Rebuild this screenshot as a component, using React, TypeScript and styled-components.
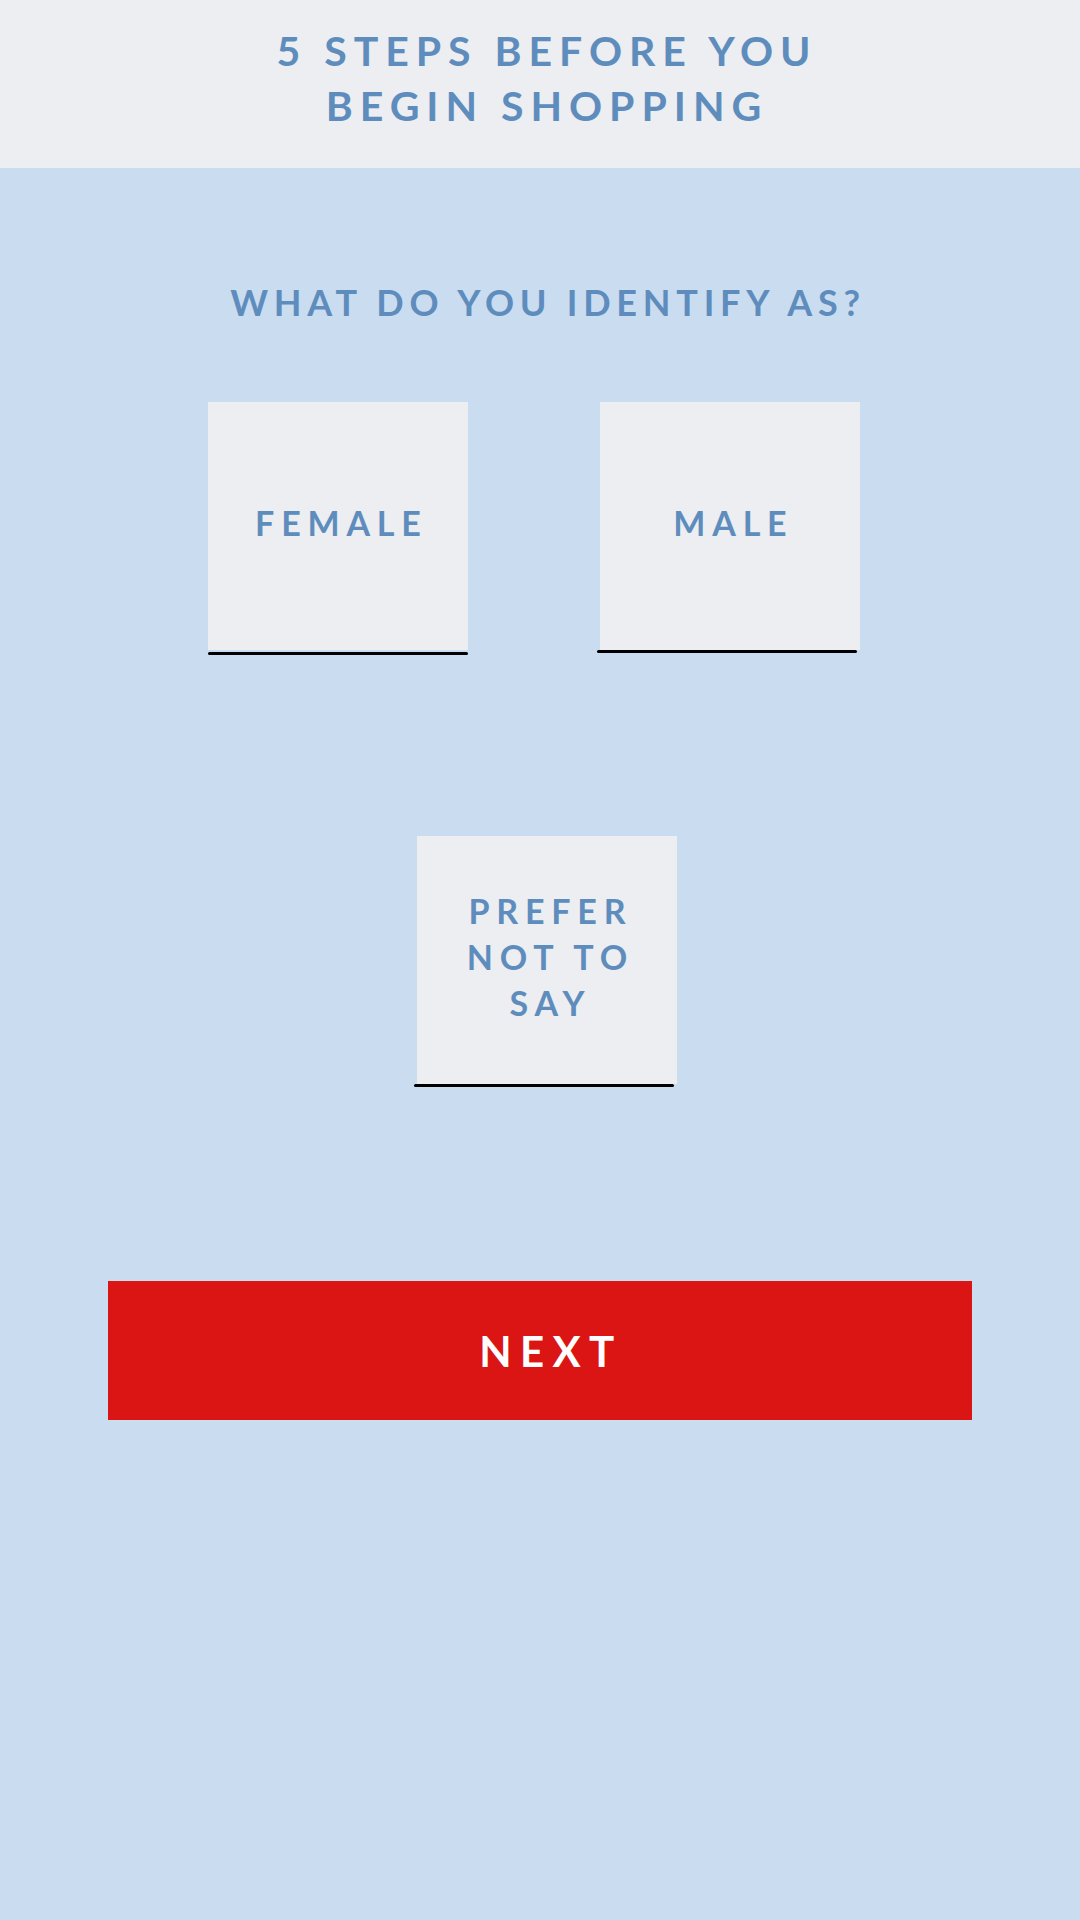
import styled, { createGlobalStyle } from 'styled-components'

const GlobalStyle = createGlobalStyle`
  html, body {
    margin: 0;
    padding: 0;
    background-color: #cadcf0;
    font-family: Lato, 'Noto Sans', sans-serif;
  }
`

const Page = styled.div`
  min-height: 1920px;
  background-color: #cadcf0;
  display: flex;
  flex-direction: column;
`

const Header = styled.header`
  height: 168px;
  box-sizing: border-box;
  padding-top: 23px;
  padding-left: 14px;
  background-color: #eceef1;
  text-align: center;
`

const Title = styled.h1`
  margin: 0;
  font-size: 41px;
  line-height: 55px;
  font-weight: 700;
  letter-spacing: 0.17em;
  color: #5e8dbd;
`

const Question = styled.h2`
  margin: 112px 0 0;
  padding-left: 16px;
  font-size: 36px;
  line-height: 44px;
  font-weight: 700;
  letter-spacing: 0.16em;
  text-align: center;
  color: #5e8dbd;
`

const OptionRow = styled.div<{ $shift: number; $top: number }>`
  display: flex;
  justify-content: center;
  gap: 132px;
  margin-top: ${({ $top }) => $top}px;
  padding-left: ${({ $shift }) => ($shift > 0 ? $shift * 2 : 0)}px;
  padding-right: ${({ $shift }) => ($shift < 0 ? -$shift * 2 : 0)}px;
`

const Option = styled.button<{ $gap?: boolean }>`
  position: relative;
  width: 260px;
  height: 248px;
  box-sizing: border-box;
  padding: 0 40px 7px;
  border: none;
  background-color: #eceef1;
  display: flex;
  align-items: center;
  justify-content: center;
  font-family: Lato, 'Noto Sans', sans-serif;
  font-size: 34px;
  line-height: 46px;
  font-weight: 700;
  letter-spacing: 0.2em;
  color: #5e8dbd;
  cursor: pointer;
  span {
    margin-right: -0.2em;
  }
  /* dark underline, sits just under the tile */
  &::after {
    content: '';
    position: absolute;
    left: ${({ $gap }) => ($gap ? 0 : -3)}px;
    right: ${({ $gap }) => ($gap ? 0 : 3)}px;
    bottom: ${({ $gap }) => ($gap ? -5 : -3)}px;
    height: 3px;
    border-radius: 2px;
    background-color: #000;
  }
`

const NextButton = styled.button`
  align-self: center;
  width: 864px;
  height: 139px;
  margin-top: 197px;
  padding-left: 28px;
  border: none;
  background-color: #db1514;
  color: #ffffff;
  font-family: Lato, 'Noto Sans', sans-serif;
  font-size: 42px;
  font-weight: 700;
  letter-spacing: 0.2em;
  cursor: pointer;
`

export default function App() {
  const options = [
    { label: 'FEMALE', gap: true },
    { label: 'MALE', gap: false },
  ]

  return (
    <>
      <GlobalStyle />
      <Page>
        <Header>
          <Title>
            5 STEPS BEFORE YOU
            <br />
            BEGIN SHOPPING
          </Title>
        </Header>
        <Question>WHAT DO YOU IDENTIFY AS?</Question>
        <OptionRow $shift={-6} $top={78}>
          {options.map((o) => (
            <Option key={o.label} $gap={o.gap}>
              <span>{o.label}</span>
            </Option>
          ))}
        </OptionRow>
        <OptionRow $shift={7} $top={186}>
          <Option>
            <span>PREFER NOT TO SAY</span>
          </Option>
        </OptionRow>
        <NextButton>NEXT</NextButton>
      </Page>
    </>
  )
}
